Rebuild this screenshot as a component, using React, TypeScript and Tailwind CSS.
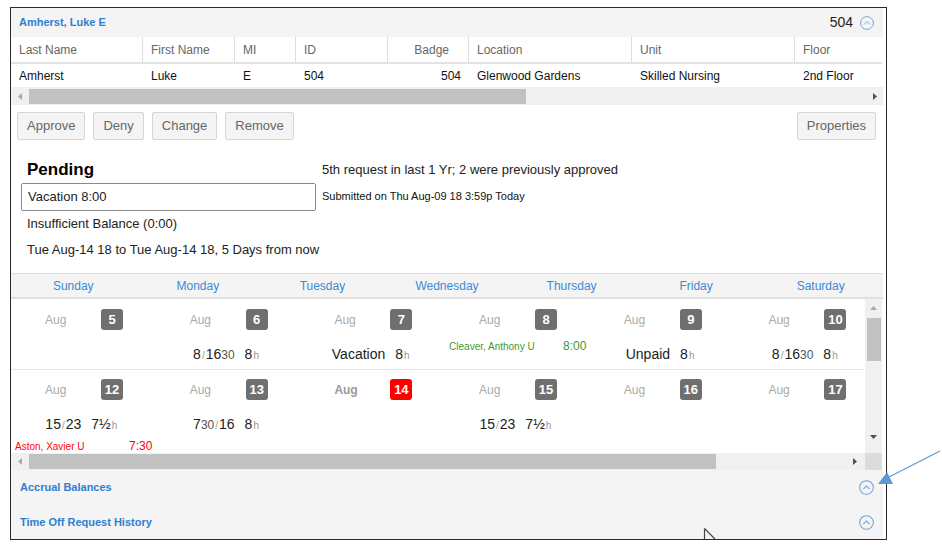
import React from 'react';

/**
 * Time off request detail panel: employee grid, actions, pending request
 * summary and a two-week schedule calendar.
 */

function CircleUp({ size = 15 }: { size?: number }) {
  return (
    <svg width={size} height={size} viewBox="0 0 16 16" fill="none" stroke="#6aa3dc" strokeWidth="1.1">
      <circle cx="8" cy="8" r="7.3" />
      <path d="M4.6 9.7 8 6.3l3.4 3.4" />
    </svg>
  );
}

type Dir = 'l' | 'r' | 'u' | 'd';

function Tri({ dir, color }: { dir: Dir; color: string }) {
  const side = dir === 'l' || dir === 'r';
  const d: Record<Dir, string> = {
    l: 'M4 0 0 3.5 4 7Z',
    r: 'M0 0 4 3.5 0 7Z',
    u: 'M0 4 3.5 0 7 4Z',
    d: 'M0 0 3.5 4 7 0Z',
  };
  return (
    <svg width={side ? 4 : 7} height={side ? 7 : 4} viewBox={side ? '0 0 4 7' : '0 0 7 4'}>
      <path d={d[dir]} fill={color} />
    </svg>
  );
}

const columns = [
  { label: 'Last Name', value: 'Amherst', w: 132 },
  { label: 'First Name', value: 'Luke', w: 92 },
  { label: 'MI', value: 'E', w: 61 },
  { label: 'ID', value: '504', w: 92 },
  { label: 'Badge', value: '504', w: 81, right: true },
  { label: 'Location', value: 'Glenwood Gardens', w: 163 },
  { label: 'Unit', value: 'Skilled Nursing', w: 163 },
  { label: 'Floor', value: '2nd Floor', w: 87 },
];

const weekDays = ['Sunday', 'Monday', 'Tuesday', 'Wednesday', 'Thursday', 'Friday', 'Saturday'];

function Btn({ children }: { children: React.ReactNode }) {
  return (
    <button
      type="button"
      className="h-[28px] px-[9px] border border-[#d6d6d6] bg-[#f4f4f4] rounded-[2px] text-[13px] text-[#666]"
    >
      {children}
    </button>
  );
}

// "8/1630" style shift times: big hour digits, small grey minutes and slash
function Shift({ parts }: { parts: [string, 'b' | 's' | 'm'][] }) {
  return (
    <span className="whitespace-nowrap">
      {parts.map(([t, k], i) =>
        k === 'b' ? (
          <span key={i} className="text-[14px] text-[#222]">{t}</span>
        ) : k === 'm' ? (
          <span key={i} className="text-[12px] text-[#555]">{t}</span>
        ) : (
          <span key={i} className="text-[10px] text-[#999] mx-[1px]">{t}</span>
        ),
      )}
    </span>
  );
}

function Hrs({ n }: { n: string }) {
  return (
    <span className="whitespace-nowrap">
      <span className="text-[14px] text-[#222]">{n}</span>
      <span className="text-[10px] text-[#999] ml-[1px]">h</span>
    </span>
  );
}

function Line({ children }: { children: React.ReactNode }) {
  return (
    <div className="mt-[15px] h-[18px] flex items-baseline justify-center gap-[10px] pr-[4px] leading-[18px]">
      {children}
    </div>
  );
}

function Names({ name, time, color, mt }: { name: string; time: string; color: string; mt: string }) {
  return (
    <div className={`flex items-center h-[14px] pl-[4px] ${mt}`}>
      <span className={`w-[114px] text-[10px] whitespace-nowrap ${color}`}>{name}</span>
      <span className={`text-[12px] ${color}`}>{time}</span>
    </div>
  );
}

function Day({ d, today, boldMonth, children }: { d: number; today?: boolean; boldMonth?: boolean; children?: React.ReactNode }) {
  return (
    <div className="w-[144.7px] shrink-0 flex flex-col">
      <div className="flex items-center h-[21px]">
        <span className={`ml-[34px] w-[56px] text-[12px] ${boldMonth ? 'font-bold text-[#9a9a9a]' : 'text-[#aaa]'}`}>Aug</span>
        <span
          className={`w-[22px] h-[21px] rounded-[3px] flex items-center justify-center text-[13px] font-bold text-white ${today ? 'bg-[#ff0000]' : 'bg-[#6f6f6f]'}`}
        >
          {d}
        </span>
      </div>
      {children}
    </div>
  );
}

export default function App() {
  return (
    <div className="relative w-[942px] h-[556px] bg-white overflow-hidden font-['Liberation_Sans',Arial,sans-serif]">
      <div className="ml-[10px] mt-[7px] w-[877px] h-[533px] border border-[#2a2a2a] flex flex-col">
        <div className="mr-[3px] flex flex-col h-full">
          {/* title bar */}
          <div className="h-[29px] bg-[#f4f4f4] flex items-center pl-[8px] pr-[9px] shrink-0">
            <span className="text-[11px] font-bold text-[#2f7fd0]">Amherst, Luke E</span>
            <span className="ml-auto text-[14px] text-[#222]">504</span>
            <span className="ml-[7px] flex"><CircleUp size={14} /></span>
          </div>

          {/* employee grid */}
          <div className="overflow-hidden shrink-0">
            <div className="flex w-max h-[27px] border-b-2 border-[#e3e3e3]">
              {columns.map((c, i) => (
                <div
                  key={c.label}
                  style={{ width: c.w }}
                  className={`flex items-center text-[12px] text-[#666] pl-[8px] ${i < columns.length - 1 ? 'border-r border-[#ddd]' : ''} ${c.right ? 'justify-end pr-[19px]' : ''}`}
                >
                  {c.label}
                </div>
              ))}
            </div>
            <div className="flex w-max h-[23px]">
              {columns.map((c) => (
                <div
                  key={c.label}
                  style={{ width: c.w }}
                  className={`flex items-center text-[12px] text-[#111] pl-[8px] whitespace-nowrap ${c.right ? 'justify-end pr-[8px]' : ''}`}
                >
                  {c.value}
                </div>
              ))}
            </div>
          </div>
          <div className="h-[18px] bg-[#f0f0f0] flex items-center shrink-0">
            <div className="w-[18px] flex justify-center"><Tri dir="l" color="#a8a8a8" /></div>
            <div className="w-[497px] h-[15px] bg-[#c1c1c1]" />
            <div className="flex-1" />
            <div className="w-[17px] flex justify-center"><Tri dir="r" color="#505050" /></div>
          </div>

          {/* actions */}
          <div className="h-[43px] flex items-start pt-[7px] pl-[6px] pr-[7px] gap-[8px] shrink-0">
            <Btn>Approve</Btn>
            <Btn>Deny</Btn>
            <Btn>Change</Btn>
            <Btn>Remove</Btn>
            <div className="ml-auto"><Btn>Properties</Btn></div>
          </div>

          {/* pending summary */}
          <div className="h-[126px] border-b border-[#ddd] flex pt-[12px] pl-[10px] shrink-0 text-[13px] text-[#222]">
            <div className="w-[295px] flex flex-col">
              <div className="pl-[6px] h-[20px] leading-[20px] text-[17px] font-bold text-black">Pending</div>
              <div className="mt-[3px] h-[28px] border border-[#8a8a8a] rounded-[2px] flex items-center pl-[6px]">Vacation 8:00</div>
              <div className="mt-[5px] pl-[6px] leading-[16px] whitespace-nowrap">Insufficient Balance (0:00)</div>
              <div className="mt-[10px] pl-[6px] leading-[16px] whitespace-nowrap">Tue Aug-14 18 to Tue Aug-14 18, 5 Days from now</div>
            </div>
            <div className="ml-[6px] flex flex-col">
              <div className="h-[20px] leading-[20px]">5th request in last 1 Yr; 2 were previously approved</div>
              <div className="mt-[9px] leading-[14px] text-[11px] text-[#111]">Submitted on Thu Aug-09 18 3:59p Today</div>
            </div>
          </div>

          {/* week header */}
          <div className="h-[25px] bg-[#f4f4f4] border-b-2 border-[#e0e0e0] grid grid-cols-7 items-center shrink-0">
            {weekDays.map((w) => (
              <div key={w} className="text-center text-[12px] text-[#3a8ad8]">{w}</div>
            ))}
          </div>

          {/* calendar body */}
          <div className="h-[154px] flex shrink-0">
            <div className="w-[854px] overflow-hidden">
              <div className="flex w-max h-[71px] pt-[10px] border-b border-[#e6e6e6]">
                <Day d={5} />
                <Day d={6}>
                  <Line>
                    <Shift parts={[['8', 'b'], ['/', 's'], ['16', 'b'], ['30', 'm']]} />
                    <Hrs n="8" />
                  </Line>
                </Day>
                <Day d={7}>
                  <Line>
                    <span className="text-[14px] text-[#222]">Vacation</span>
                    <Hrs n="8" />
                  </Line>
                </Day>
                <Day d={8}>
                  <Names name="Cleaver, Anthony U" time="8:00" color="text-[#3f9a2c]" mt="mt-[9px]" />
                </Day>
                <Day d={9}>
                  <Line>
                    <span className="text-[14px] text-[#222]">Unpaid</span>
                    <Hrs n="8" />
                  </Line>
                </Day>
                <Day d={10}>
                  <Line>
                    <Shift parts={[['8', 'b'], ['/', 's'], ['16', 'b'], ['30', 'm']]} />
                    <Hrs n="8" />
                  </Line>
                </Day>
              </div>
              <div className="flex w-max pt-[9px]">
                <Day d={12}>
                  <Line>
                    <Shift parts={[['15', 'b'], ['/', 's'], ['23', 'b']]} />
                    <Hrs n="7½" />
                  </Line>
                  <Names name="Aston, Xavier U" time="7:30" color="text-[#ff0000]" mt="mt-[6px]" />
                </Day>
                <Day d={13}>
                  <Line>
                    <Shift parts={[['7', 'b'], ['30', 'm'], ['/', 's'], ['16', 'b']]} />
                    <Hrs n="8" />
                  </Line>
                </Day>
                <Day d={14} today boldMonth />
                <Day d={15}>
                  <Line>
                    <Shift parts={[['15', 'b'], ['/', 's'], ['23', 'b']]} />
                    <Hrs n="7½" />
                  </Line>
                </Day>
                <Day d={16} />
                <Day d={17} />
              </div>
            </div>
            <div className="w-[17px] bg-[#f0f0f0] flex flex-col items-center">
              <div className="h-[17px] flex items-center"><Tri dir="u" color="#a8a8a8" /></div>
              <div className="mt-[2px] w-[14px] h-[43px] bg-[#c1c1c1]" />
              <div className="flex-1" />
              <div className="h-[24px] flex items-start pt-[6px]"><Tri dir="d" color="#505050" /></div>
            </div>
          </div>
          <div className="h-[17px] flex shrink-0">
            <div className="w-[854px] bg-[#f0f0f0] flex items-center">
              <div className="w-[18px] flex justify-center"><Tri dir="l" color="#a8a8a8" /></div>
              <div className="w-[687px] h-[15px] bg-[#c1c1c1]" />
              <div className="flex-1" />
              <div className="w-[20px] flex justify-center"><Tri dir="r" color="#505050" /></div>
            </div>
            <div className="w-[17px] bg-[#dcdcdc]" />
          </div>

          {/* collapsed sections */}
          <div className="flex-1 bg-[#f4f4f4] flex flex-col">
            <div className="h-[35px] flex items-center pl-[9px] pr-[9px]">
              <span className="text-[11px] font-bold text-[#2f7fd0]">Accrual Balances</span>
              <span className="ml-auto flex"><CircleUp /></span>
            </div>
            <div className="h-[34px] flex items-center pl-[9px] pr-[9px]">
              <span className="text-[11px] font-bold text-[#2f7fd0]">Time Off Request History</span>
              <span className="ml-auto flex"><CircleUp /></span>
            </div>
          </div>
        </div>
      </div>

      {/* annotation arrow + mouse cursor drawn over the screenshot */}
      <svg className="absolute inset-0 pointer-events-none" width="942" height="556">
        <line x1="940" y1="451" x2="889" y2="477" stroke="#5b9bd5" strokeWidth="1.2" />
        <path d="M878 484 887 472 893 484Z" fill="#5b9bd5" />
        <path d="M704.5 528.5V539M704.5 528.5 715 539" stroke="#444" strokeWidth="1.2" fill="none" />
      </svg>
    </div>
  );
}
